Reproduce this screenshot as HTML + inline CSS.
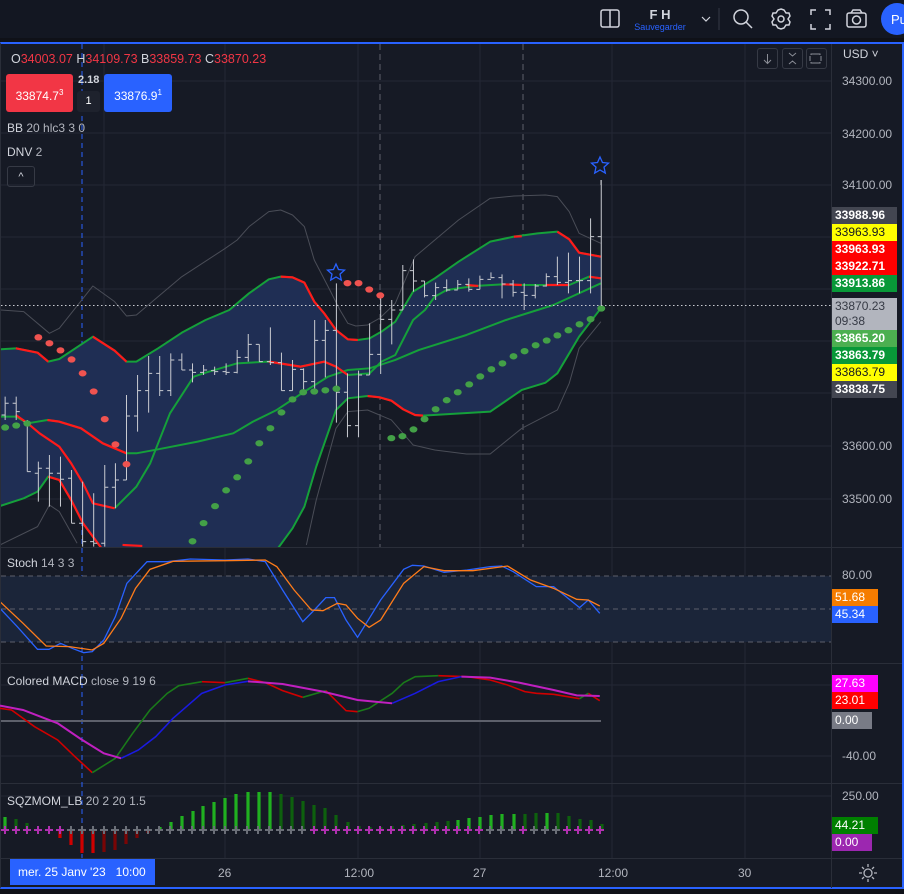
<!DOCTYPE html>
<html><head><meta charset="utf-8">
<style>
*{margin:0;padding:0;box-sizing:border-box}
body{width:904px;height:894px;background:#0f1118;overflow:hidden;font-family:"Liberation Sans",sans-serif;position:relative;color:#d1d4dc}
.a{position:absolute}
.tag{position:absolute;left:832px;width:65px;height:17px;font-size:12px;line-height:17px;padding-left:3px;font-weight:bold;color:#fff}
.ax{position:absolute;left:842px;font-size:12px;color:#b2b5be}
.t{position:absolute;font-size:12px;color:#b2b5be;top:866px}
.lg{font-size:12px;color:#b2b5be}
.lg b{color:#d1d4dc;font-weight:normal}
.btn{position:absolute;top:48px;width:21px;height:21px;border:1px solid #363a45;border-radius:3px}
</style></head><body>
<div class="a" style="left:0;top:0;width:904px;height:38px;background:#131722"></div>
<svg class="a" style="left:0;top:0" width="904" height="40">
 <g fill="none" stroke="#d1d4dc" stroke-width="1.5">
  <rect x="601" y="10" width="18" height="17" rx="2"/><line x1="610" y1="10" x2="610" y2="27"/>
  <path d="M702 17l4 4 4-4" stroke-width="1.2"/>
  <circle cx="741" cy="17" r="7"/><line x1="746" y1="22" x2="752" y2="28"/>
  <circle cx="781" cy="19" r="3"/><path d="M781 9l3 1 2 3 3 0 1 3-2 3 2 3-1 3-3 0-2 3-3 1-3-1-2-3-3 0-1-3 2-3-2-3 1-3 3 0 2-3z"/>
  <path d="M811 15v-5h5M825 10h5v5M830 24v5h-5M816 29h-5v-5"/>
  <rect x="847" y="13" width="19" height="14" rx="2"/><circle cx="856.5" cy="20" r="4"/><path d="M851 13l2-3h7l2 3"/>
 </g>
 <line x1="719" y1="8" x2="719" y2="30" stroke="#363a45"/>
 <text x="660" y="19" fill="#d1d4dc" font-size="13" font-weight="bold" text-anchor="middle" font-family="Liberation Sans">F H</text>
 <text x="660" y="30" fill="#2962ff" font-size="9" text-anchor="middle" font-family="Liberation Sans">Sauvegarder</text>
 <circle cx="897" cy="19" r="16" fill="#2962ff"/>
 <text x="891" y="24" fill="#fff" font-size="13" font-family="Liberation Sans">Pu</text>
</svg>
<div class="a" style="left:0;top:42px;width:904px;height:847px;background:#161a25;border-top:2px solid #2962ff;border-right:2px solid #2962ff;border-bottom:2px solid #2962ff;border-left:1px solid #2a2e39"></div>

<svg class="a" style="left:0;top:0" width="904" height="894">
<defs>
 <clipPath id="cm"><rect x="1" y="44" width="830" height="503"/></clipPath>
 <clipPath id="cs"><rect x="1" y="548" width="830" height="114"/></clipPath>
</defs>
<g stroke="#242835" stroke-width="1">
 <path d="M104 44V547M225 44V858M358 44V858M480 44V858M612 44V858M745 44V858"/>
 <path d="M1 81H831M1 133H831M1 185H831M1 237H831M1 289H831M1 341H831M1 393H831M1 446H831M1 499H831"/>
 <path d="M1 685H831M1 756H831M1 796H831"/>
</g>
<g stroke="#2a2e39"><path d="M1 547.5H902M1 663.5H902M1 783.5H902M1 858.5H902M831.5 44V888"/></g>
<g stroke="#5d606b" stroke-dasharray="6,4"><path d="M380 44V547M523 44V547"/></g>
<path d="M82 44V858" stroke="#2962ff" stroke-dasharray="5,4"/>

<g clip-path="url(#cm)">
<g transform="translate(0,180) scale(0.3953,0.3333)" fill="none" stroke-linejoin="round">
 <path fill="#1f2e54" stroke="none" d="M0 508L40 505 95 518 122 545 150 537 235 470 290 512 320 545 345 545 400 505 460 458 520 420 580 390 630 340 680 298 710 290 740 292 770 308 795 365 820 400 850 450 880 478 905 480 935 475 965 455 1000 425 1045 335 1100 295 1160 245 1240 185 1300 170 1360 160 1410 155 1440 178 1465 218 1520 230 1520 385 1465 470 1440 520 1410 580 1380 608 1320 630 1240 695 1070 707 1050 705 1020 688 990 662 960 652 930 648 880 655 850 690 800 860 770 980 740 1045 700 1110 260 1110 210 1030 180 960 150 900 122 890 95 935 60 955 0 978Z"/>
 <g stroke="#4a4d57">
 <path vector-effect="non-scaling-stroke" d="M0 390L60 395 125 460 150 445 235 318 290 365 320 408 345 405 460 290 570 205 600 180 630 140 680 95 710 90 740 105 770 140 795 240 830 320 860 390 880 430 900 438 930 435 960 415 1000 370 1050 230 1100 180 1160 120 1240 55 1300 48 1380 45 1410 50 1440 95 1465 160 1520 190"/>
 <path vector-effect="non-scaling-stroke" d="M0 1095L95 1040 125 975 150 995 195 1090M775 1095L800 960 850 745 880 695 930 690 990 720 1045 795 1100 810 1180 822 1240 822 1320 745 1410 690 1440 610 1465 505 1520 425"/>
 </g>
 <g stroke="#15a03a" stroke-width="2">
 <path vector-effect="non-scaling-stroke" d="M0 508L40 505 95 518 122 545 150 537 235 470 290 512 320 545 345 545 400 505 460 458 520 420 580 390 630 340 680 298 710 290 740 292 770 308 795 365 820 400 850 450 880 478 905 480 935 475 965 455 1000 425 1045 335 1100 295 1160 245 1240 185 1300 170 1360 160 1410 155 1440 178 1465 218 1520 230"/>
 <path vector-effect="non-scaling-stroke" d="M0 978L60 955 95 935 122 890 150 900 180 960 210 1030 260 1110M700 1110L740 1045 770 980 800 860 850 690 880 655 930 648 960 652 990 662 1020 688 1050 705 1070 707 1240 695 1320 630 1380 608 1410 580 1440 520 1465 470 1520 385"/>
 <path vector-effect="non-scaling-stroke" d="M0 710L40 710 70 730 120 720 150 725 205 745 260 790 320 820 345 820 400 808 500 785 590 760 640 725 700 690 770 635 830 590 880 570 935 565 1000 540 1060 510 1180 465 1280 420 1400 375 1520 310"/>
 <path vector-effect="non-scaling-stroke" d="M290 985L345 920 380 850 430 700 490 590 520 578 600 550 680 545 760 560 820 545 850 560 880 585 935 580 965 545 1000 525 1045 420 1075 390 1100 350 1130 330 1200 318 1270 313 1320 315 1380 315 1440 315 1490 290 1520 295"/>
 </g>
 <g stroke="#ff1a1a" stroke-width="2.2">
 <path vector-effect="non-scaling-stroke" d="M40 505L95 518 122 545M235 470L290 512 320 545M710 290L740 292 770 308 795 365 820 400 850 450 880 478 905 480M1300 170L1320 169M1410 155L1440 178 1465 218 1520 230"/>
 <path vector-effect="non-scaling-stroke" d="M120 720L150 725 205 745 260 790 320 820"/>
 <path vector-effect="non-scaling-stroke" d="M40 705L70 730 100 760 150 800 180 850 210 910 235 970 290 985M122 890L150 900 180 960 210 1030 260 1110M310 1095L360 1098M930 648L960 652 990 662 1020 688 1050 705 1070 707"/>
 <path vector-effect="non-scaling-stroke" d="M680 545L760 560 820 545 850 560 880 585M1180 315L1210 318M1270 313L1320 315M1380 315L1440 315M1490 290L1520 295"/>
 </g>
 <g stroke="#c9cbd1" stroke-width="1">
 <path vector-effect="non-scaling-stroke" d="M13 650V720M4 705H13M13 670H22M41 650V720M32 670H41M41 695H50M69 720V875M60 725H69M69 875H78M97 845V965M88 880H97M97 865H106M125 825V980M116 865H125M125 880H134M153 830V980M144 880H153M153 898H162M181 870V1030M172 895H181M181 1030H190M209 905V1100M200 1030H209M209 1085H218M237 940V1100M228 1085H237M237 1090H246M265 855V1100M256 1090H265M265 922H274M292 850V985M283 922H292M292 900H301M320 645V900M311 900H320M320 708H329M348 585V755M339 708H348M348 632H357M376 528V698M367 632H376M376 580H385M404 528V648M395 580H404M404 632H413M432 520V648M423 632H432M432 540H441M460 520V570M451 540H460M460 570H469M487 550V607M478 570H487M487 577H496M515 555V585M506 577H515M515 570H524M543 560V585M534 572H543M543 575H552M572 550V585M563 575H572M572 577H581M600 510V580M591 577H600M600 532H609M628 462V545M619 532H628M628 493H637M656 493V545M647 493H656M656 545H665M684 442V555M675 545H684M684 548H693M712 518V632M703 548H712M712 632H721M740 540V632M731 632H740M740 568H749M768 565V630M759 568H768M768 605H777M796 420V630M787 605H796M796 481H805M823 420V592M814 481H823M823 451H832M851 310V728M842 451H851M851 637H860M879 580V772M870 637H879M879 737H888M907 572V772M898 737H907M907 585H916M935 430V585M926 585H935M935 523H944M963 340V582M954 523H963M963 418H972M991 360V493M982 418H991M991 390H1000M1019 255V390M1010 390H1019M1019 272H1028M1046 238V335M1037 272H1046M1046 303H1055M1074 303V352M1065 303H1074M1074 347H1083M1102 308V360M1093 347H1102M1102 323H1111M1130 298V335M1121 323H1130M1130 330H1139M1158 300V328M1149 330H1158M1158 313H1167M1186 295V335M1177 313H1186M1186 328H1195M1214 287V328M1205 328H1214M1214 298H1223M1242 277V295M1233 298H1242M1242 293H1251M1270 283V355M1261 293H1270M1270 312H1279M1298 300V350M1289 312H1298M1298 337H1307M1326 310V390M1317 337H1326M1326 346H1335M1354 312V355M1345 346H1354M1354 318H1363M1382 280V320M1373 318H1382M1382 290H1391M1410 230V315M1401 290H1410M1410 307H1419M1438 218V340M1429 307H1438M1438 302H1447M1466 230V340M1457 302H1466M1466 302H1475M1494 115V340M1485 302H1494M1494 170H1503M1521 0V385M1512 170H1521"/>
 </g>
 <g fill="#ef5350" transform="scale(1,1.186)">
  <ellipse cx="97" cy="398" rx="10" ry="8"/><ellipse cx="125" cy="413" rx="10" ry="8"/><ellipse cx="153" cy="431" rx="10" ry="8"/><ellipse cx="181" cy="454" rx="10" ry="8"/><ellipse cx="209" cy="489" rx="10" ry="8"/><ellipse cx="237" cy="535" rx="10" ry="8"/><ellipse cx="265" cy="605" rx="10" ry="8"/><ellipse cx="292" cy="669" rx="10" ry="8"/><ellipse cx="320" cy="719" rx="10" ry="8"/><ellipse cx="879" cy="261" rx="10" ry="8"/><ellipse cx="907" cy="261" rx="10" ry="8"/><ellipse cx="934" cy="277" rx="10" ry="8"/><ellipse cx="962" cy="292" rx="10" ry="8"/>
 </g>
 <g fill="#43a047" transform="scale(1,1.186)">
  <ellipse cx="13" cy="626" rx="10" ry="8"/><ellipse cx="41" cy="621" rx="10" ry="8"/><ellipse cx="69" cy="616" rx="10" ry="8"/><ellipse cx="487" cy="914" rx="10" ry="8"/><ellipse cx="515" cy="868" rx="10" ry="8"/><ellipse cx="544" cy="825" rx="10" ry="8"/><ellipse cx="572" cy="785" rx="10" ry="8"/><ellipse cx="600" cy="752" rx="10" ry="8"/><ellipse cx="628" cy="712" rx="10" ry="8"/><ellipse cx="656" cy="666" rx="10" ry="8"/><ellipse cx="684" cy="628" rx="10" ry="8"/><ellipse cx="712" cy="588" rx="10" ry="8"/><ellipse cx="740" cy="555" rx="10" ry="8"/><ellipse cx="767" cy="537" rx="10" ry="8"/><ellipse cx="795" cy="535" rx="10" ry="8"/><ellipse cx="823" cy="532" rx="10" ry="8"/><ellipse cx="851" cy="528" rx="10" ry="8"/><ellipse cx="990" cy="653" rx="10" ry="8"/><ellipse cx="1018" cy="648" rx="10" ry="8"/><ellipse cx="1046" cy="631" rx="10" ry="8"/><ellipse cx="1074" cy="605" rx="10" ry="8"/><ellipse cx="1102" cy="580" rx="10" ry="8"/><ellipse cx="1130" cy="557" rx="10" ry="8"/><ellipse cx="1158" cy="537" rx="10" ry="8"/><ellipse cx="1187" cy="517" rx="10" ry="8"/><ellipse cx="1215" cy="497" rx="10" ry="8"/><ellipse cx="1243" cy="479" rx="10" ry="8"/><ellipse cx="1271" cy="464" rx="10" ry="8"/><ellipse cx="1299" cy="446" rx="10" ry="8"/><ellipse cx="1327" cy="433" rx="10" ry="8"/><ellipse cx="1355" cy="418" rx="10" ry="8"/><ellipse cx="1383" cy="406" rx="10" ry="8"/><ellipse cx="1410" cy="393" rx="10" ry="8"/><ellipse cx="1438" cy="380" rx="10" ry="8"/><ellipse cx="1466" cy="365" rx="10" ry="8"/><ellipse cx="1494" cy="352" rx="10" ry="8"/><ellipse cx="1521" cy="325" rx="10" ry="8"/>
 </g>
</g>
<path d="M336 264l2.5 5.5 6 .6-4.5 4 1.3 6-5.3-3.1-5.3 3.1 1.3-6-4.5-4 6-.6z" fill="none" stroke="#2962ff" stroke-width="1.3"/>
<path d="M600 157l2.5 5.5 6 .6-4.5 4 1.3 6-5.3-3.1-5.3 3.1 1.3-6-4.5-4 6-.6z" fill="none" stroke="#2962ff" stroke-width="1.3"/>
<line x1="601" y1="180" x2="601" y2="185" stroke="#c9cbd1"/>
</g>
<line x1="1" y1="305.5" x2="831" y2="305.5" stroke="#c9cbd1" stroke-dasharray="1.5,2.5"/>

<rect x="1" y="576" width="830" height="66" fill="#1b2539"/>
<g stroke="#5d606b" stroke-dasharray="5,4"><path d="M1 576H831M1 609H831M1 642H831"/></g>
<g clip-path="url(#cs)">
<g transform="translate(0,540) scale(0.5767,0.3333)" fill="none">
 <path vector-effect="non-scaling-stroke" stroke="#2962ff" stroke-width="1.3" d="M0 205L30 260 65 328 85 328 105 310 125 325 145 338 160 335 180 300 200 230 220 130 255 65 290 65 330 57 390 60 430 57 460 65 490 150 525 245 545 210 565 173 580 173 600 240 620 292 660 180 700 88 715 76 735 78 770 97 810 90 850 80 870 78 890 95 930 140 960 140 1005 203 1020 180 1040 220"/>
 <path vector-effect="non-scaling-stroke" stroke="#ff7c1a" stroke-width="1.3" d="M0 185L40 250 80 318 120 320 160 330 180 310 210 235 235 145 260 88 300 64 390 62 460 60 480 80 510 150 540 210 560 212 585 190 600 195 620 235 640 262 660 240 700 130 735 80 770 92 820 92 880 78 920 120 960 145 1000 178 1020 180 1040 198"/>
</g>
</g>
<line x1="1" y1="721" x2="601" y2="721" stroke="#5d606b" stroke-width="2"/>
<g transform="translate(0,540) scale(0.5767,0.3333)" fill="none" stroke-width="1.6">
 <path vector-effect="non-scaling-stroke" stroke="#d00000" d="M0 505L20 510 60 560 100 600 130 650 160 698M350 425L390 428M430 415L460 428 490 452 525 472M565 452L600 512 620 515M760 407L810 410 850 420 880 435 910 455 930 460 960 463 1005 476M1020 460L1040 482"/>
 <path vector-effect="non-scaling-stroke" stroke="#1a7a1a" d="M160 698L200 655 230 580 260 510 290 460 310 437 350 425M390 428L430 415M525 472L565 452M620 515L640 505 680 460 700 428 720 410 760 407M1005 476L1020 460"/>
 <path vector-effect="non-scaling-stroke" stroke="#c020c0" stroke-width="2" d="M0 497L40 510 100 550 140 597 180 640 210 655M430 424L490 432 560 455 620 480 680 490M800 410L850 413 900 428 960 450 1000 466 1040 468"/>
 <path vector-effect="non-scaling-stroke" stroke="#1a1ae0" d="M210 655L240 630 270 590 300 535 350 460 390 435 430 424M680 490L720 460 760 425 800 410"/>
</g>
<g stroke-width="3.2">
 <path stroke="#20b020" d="M5 830V817M160 830V827M171 830V822M182 830V816M193 830V811M203 830V806M214 830V802M225 830V798M236 830V794M248 830V792M259 830V792M270 830V792M458 830V820M469 830V818M480 830V817M491 830V815M502 830V814M514 830V814M547 830V813"/>
 <path stroke="#0e600e" d="M16 830V819M27 830V823M281 830V794M292 830V797M303 830V801M314 830V805M325 830V808M336 830V815M348 830V822M359 830V826M370 830V827M381 830V827M392 830V826M403 830V825M414 830V824M426 830V823M437 830V822M448 830V821M525 830V814M536 830V813M558 830V813M569 830V816M580 830V819M591 830V820M602 830V824"/>
 <path stroke="#d00000" d="M60 830V838M71 830V845M82 830V853M93 830V853"/>
 <path stroke="#7a0505" d="M104 830V852M115 830V850M126 830V844M137 830V838M148 830V833"/>
</g>
<g stroke-width="2">
 <path stroke="#b030b0" d="M1 830H9M5 826V834M12 830H20M16 826V834M23 830H31M27 826V834M34 830H42M38 826V834M45 830H53M49 826V834M56 830H64M60 826V834M310 830H318M314 826V834M321 830H329M325 826V834M332 830H340M336 826V834M343 830H351M347 826V834M354 830H362M358 826V834M365 830H373M369 826V834M376 830H384M380 826V834M387 830H395M391 826V834M398 830H406M402 826V834M409 830H417M413 826V834M420 830H428M424 826V834M431 830H439M435 826V834M442 830H450M446 826V834M453 830H461M457 826V834M464 830H472M468 826V834M475 830H483M479 826V834M519 830H527M523 826V834M563 830H571M567 826V834M574 830H582M578 826V834M585 830H593M589 826V834M596 830H604M600 826V834"/>
 <path stroke="#6b6f78" d="M67 830H75M71 826V834M78 830H86M82 826V834M89 830H97M93 826V834M100 830H108M104 826V834M111 830H119M115 826V834M122 830H130M126 826V834M133 830H141M137 826V834M144 830H152M148 826V834M155 830H163M159 826V834M166 830H174M170 826V834M177 830H185M181 826V834M188 830H196M192 826V834M199 830H207M203 826V834M210 830H218M214 826V834M221 830H229M225 826V834M232 830H240M236 826V834M243 830H251M247 826V834M254 830H262M258 826V834M265 830H273M269 826V834M276 830H284M280 826V834M287 830H295M291 826V834M298 830H306M302 826V834M486 830H494M490 826V834M497 830H505M501 826V834M508 830H516M512 826V834M530 830H538M534 826V834M541 830H549M545 826V834M552 830H560M556 826V834"/>
</g>
<g stroke="#b2b5be" fill="none" stroke-width="1.3"><circle cx="868" cy="873" r="4"/><path d="M868 864v3M868 879v3M859 873h3M874 873h3M862 867l2 2M872 877l2 2M874 867l-2 2M862 879l2-2"/></g>
</svg>

<div class="a lg" style="left:11px;top:52px;font-size:12.5px"><b>O</b><span style="color:#f23645">34003.07</span> <b>H</b><span style="color:#f23645">34109.73</span> <b>B</b><span style="color:#f23645">33859.73</span> <b>C</b><span style="color:#f23645">33870.23</span></div>
<div class="a" style="left:6px;top:74px;width:67px;height:38px;background:#f23645;border-radius:3px;color:#fff;font-size:12px;line-height:38px;text-align:center">33874.7<sup style="font-size:8px">3</sup></div>
<div class="a" style="left:78px;top:74px;font-size:11px;font-weight:bold;color:#d1d4dc">2.18</div>
<div class="a" style="left:77px;top:91px;width:23px;height:21px;background:#1e222d;border-radius:3px;font-size:11px;text-align:center;line-height:21px;color:#fff">1</div>
<div class="a" style="left:104px;top:74px;width:68px;height:38px;background:#2962ff;border-radius:3px;color:#fff;font-size:12px;line-height:38px;text-align:center">33876.9<sup style="font-size:8px">1</sup></div>
<div class="a lg" style="left:7px;top:121px"><b>BB</b> 20 hlc3 3 0</div>
<div class="a lg" style="left:7px;top:145px"><b>DNV</b> 2</div>
<div class="a" style="left:7px;top:166px;width:28px;height:21px;border:1px solid #363a45;border-radius:3px;color:#d1d4dc;font-size:11px;text-align:center;line-height:20px">^</div>
<div class="btn" style="left:757px"></div><div class="btn" style="left:782px"></div><div class="btn" style="left:806px"></div>
<svg class="a" style="left:757px;top:48px" width="72" height="21" fill="none" stroke="#8a8d96"><path d="M10.5 6v9M7 12l3.5 3.5 3.5-3.5M32 5l3.5 3 3.5-3M32 16l3.5-3 3.5 3M54 7v-1h9v1M54 14v1h9v-1M53 8v5M64 8v5"/></svg>
<div class="a lg" style="left:843px;top:47px;color:#d1d4dc">USD ˅</div>
<div class="a lg" style="left:7px;top:556px"><b>Stoch</b> 14 3 3</div>
<div class="a lg" style="left:7px;top:674px"><b>Colored MACD</b> close 9 19 6</div>
<div class="a lg" style="left:7px;top:794px"><b>SQZMOM_LB</b> 20 2 20 1.5</div>

<div class="ax" style="top:74px">34300.00</div>
<div class="ax" style="top:127px">34200.00</div>
<div class="ax" style="top:178px">34100.00</div>
<div class="ax" style="top:439px">33600.00</div>
<div class="ax" style="top:492px">33500.00</div>
<div class="tag" style="top:207px;background:#434651">33988.96</div>
<div class="tag" style="top:224px;background:#ffff00;color:#131722;font-weight:normal">33963.93</div>
<div class="tag" style="top:241px;background:#ff0000">33963.93</div>
<div class="tag" style="top:258px;background:#ff0000">33922.71</div>
<div class="tag" style="top:275px;background:#089838">33913.86</div>
<div class="tag" style="top:298px;height:32px;background:#b2b5be;color:#363a45;font-weight:normal;line-height:15px;padding-top:1px">33870.23<br>09:38</div>
<div class="tag" style="top:330px;background:#4caf50">33865.20</div>
<div class="tag" style="top:347px;background:#089838">33863.79</div>
<div class="tag" style="top:364px;background:#ffff00;color:#131722;font-weight:normal">33863.79</div>
<div class="tag" style="top:381px;background:#434651">33838.75</div>
<div class="ax" style="top:568px">80.00</div>
<div class="tag" style="top:589px;width:46px;background:#f57c00;font-weight:normal">51.68</div>
<div class="tag" style="top:606px;width:46px;background:#2962ff;font-weight:normal">45.34</div>
<div class="tag" style="top:675px;width:46px;background:#ff00ff;font-weight:normal">27.63</div>
<div class="tag" style="top:692px;width:46px;background:#ff0000;font-weight:normal">23.01</div>
<div class="tag" style="top:712px;width:40px;background:#787b86;font-weight:normal">0.00</div>
<div class="ax" style="top:749px">-40.00</div>
<div class="ax" style="top:789px">250.00</div>
<div class="tag" style="top:817px;width:46px;background:#008000;font-weight:normal">44.21</div>
<div class="tag" style="top:834px;width:40px;background:#9c27b0;font-weight:normal">0.00</div>

<div class="a" style="left:10px;top:859px;width:145px;height:26px;background:#2962ff;color:#fff;font-size:12px;line-height:26px;padding-left:8px">mer. 25 Janv '23&nbsp;&nbsp;&nbsp;10:00</div>
<div class="t" style="left:218px">26</div>
<div class="t" style="left:344px">12:00</div>
<div class="t" style="left:473px">27</div>
<div class="t" style="left:598px">12:00</div>
<div class="t" style="left:738px">30</div>
</body></html>
